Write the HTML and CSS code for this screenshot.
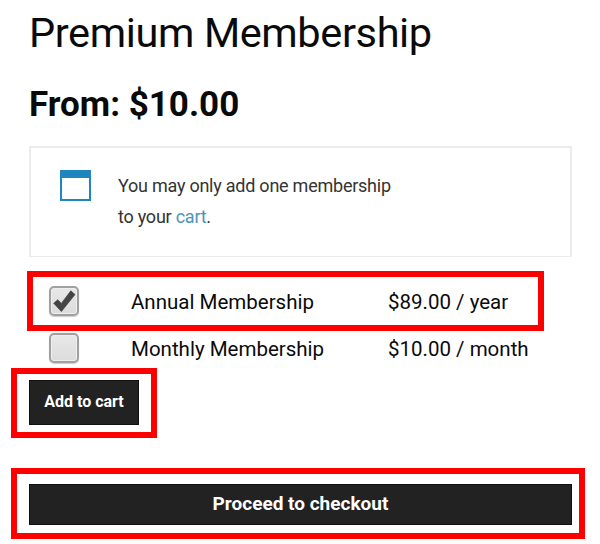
FILE: index.html
```
<!DOCTYPE html>
<html lang="en">
<head>
  <meta charset="UTF-8" />
  <title>Premium Membership</title>
  <link rel="stylesheet" href="styles.css">
</head>
<body>
  <main class="product">
    <h1 class="title">Premium Membership</h1>
    <p class="price">From: $10.00</p>

    <div class="notice">
      <span class="notice-icon"></span>
      <p class="notice-text">You may only add one membership<br>to your <a href="#">cart</a>.</p>
    </div>

    <form class="cart">
      <div class="option highlight">
        <span class="checkbox">
          <svg viewBox="0 0 30 30" width="30" height="30">
            <path d="M4.7 17.3 8.8 13.7 12.3 17.4 21.8 4.8 26 8.6 12.4 25.5Z" fill="#454545" stroke="#333" stroke-width="0.6" />
          </svg>
        </span>
        <span class="name">Annual Membership</span>
        <span class="amount">$89.00 / year</span>
      </div>
      <div class="option">
        <span class="checkbox"></span>
        <span class="name">Monthly Membership</span>
        <span class="amount">$10.00 / month</span>
      </div>

      <div class="action action-add highlight">
        <button class="button button-add" type="button">Add to cart</button>
      </div>
      <div class="action action-checkout highlight">
        <button class="button button-checkout" type="button">Proceed to checkout</button>
      </div>
    </form>
  </main>
</body>
</html>
```

FILE: styles.css
```
* {
  box-sizing: border-box;
}

body {
  margin: 0;
  background-color: #fff;
  color: #0a0a0a;
  font-family: Roboto, "Liberation Sans", sans-serif;
}

.product {
  height: 544px;
  padding: 9px 15px 0 11px;
  overflow: hidden;
}

.title {
  margin: 0 0 0 18px;
  font-size: 41.5px;
  font-weight: 400;
  line-height: 48px;
  letter-spacing: -0.38px;
  white-space: nowrap;
}

.price {
  margin: 28px 0 0 18px;
  font-size: 35px;
  font-weight: 700;
  line-height: 40px;
  white-space: nowrap;
}

/* cart notice */
.notice {
  display: flex;
  width: 543px;
  height: 111px;
  margin: 21px 0 0 18px;
  padding: 22px 0 0 29px;
  border: 2px solid #ececec;
  border-bottom-width: 1px;
}

.notice-icon {
  width: 31px;
  height: 31px;
  border: 2px solid #1e85be;
  border-top-width: 8px;
}

.notice-text {
  margin: 1px 0 0 27px;
  color: #333;
  font-size: 18px;
  line-height: 30.5px;
  letter-spacing: -0.24px;
  white-space: nowrap;
}

.notice-text a {
  color: #4e93b8;
  text-decoration: none;
}

.cart {
  margin: 0;
}

/* red marker frame */
.highlight {
  border: 6px solid #f00;
}

.option {
  display: flex;
  align-items: center;
  width: 517px;
  height: 37px;
  margin-left: 16px;
  padding: 0 0 3px 22px;
  font-size: 20.5px;
  line-height: 24px;
  white-space: nowrap;
}

.option.highlight {
  height: 60px;
  margin-top: 14px;
  padding: 0 0 0 16px;
}

.checkbox {
  width: 30px;
  height: 30px;
  border: 2px solid #a0a0a0;
  border-radius: 5px;
  background: linear-gradient(#e8e8e8, #dcdcdc);
  box-shadow: 0 1px 1px #ccc, inset 0 0 0 1px #eee;
}

.checkbox svg {
  display: block;
  margin: -2px;
}

.name,
.amount {
  padding-top: 2px;
}

.name {
  width: 257px;
  margin-left: 52px;
}

/* buttons */
.action-add {
  width: 146px;
  height: 70px;
  padding: 6px 0 0 12px;
}

.action-checkout {
  width: 574px;
  height: 71px;
  margin-top: 30px;
  padding: 10px 0 0 12px;
}

.button {
  display: block;
  padding: 0 0 2px;
  border: 1px solid #101010;
  background-color: #222;
  color: #fff;
  font-family: inherit;
  font-weight: 700;
}

.button-add {
  width: 110px;
  height: 45px;
  font-size: 16px;
}

.button-checkout {
  width: 543px;
  height: 41px;
  font-size: 19px;
}
```
